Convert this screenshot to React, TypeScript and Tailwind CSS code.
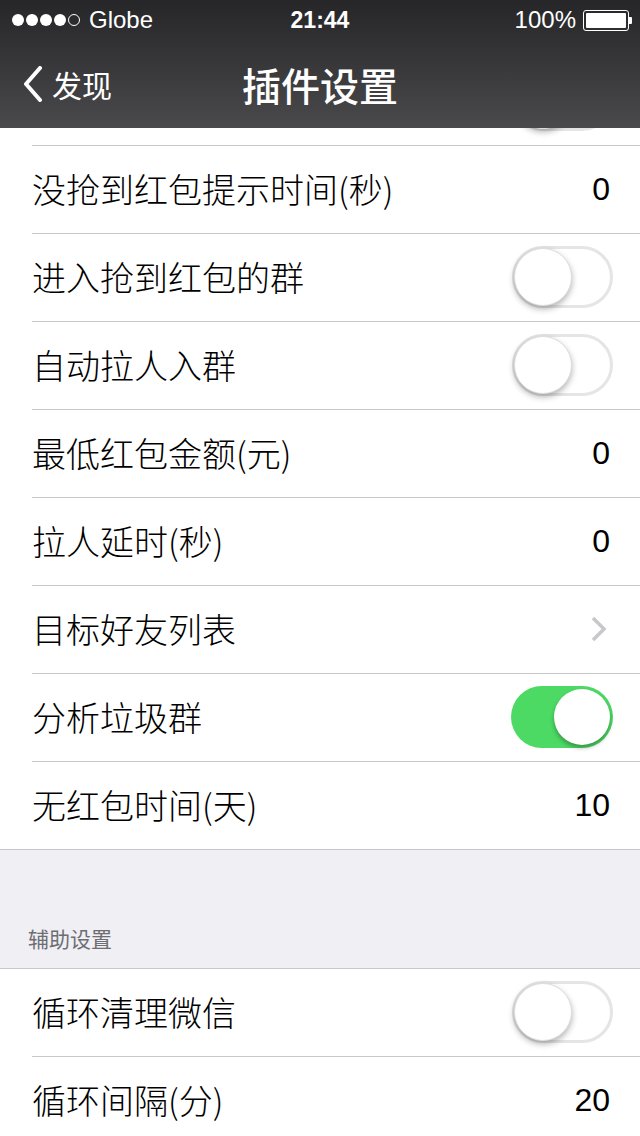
import React from "react";

const font = { fontFamily: '"Noto Sans CJK SC", "Liberation Sans", sans-serif' };

function Toggle({ on }: { on: boolean }) {
  return on ? (
    <div className="relative w-[102px] h-[62px] rounded-full bg-[#4cd964]">
      <div className="absolute right-[3px] top-[3px] w-[56px] h-[56px] rounded-full bg-white shadow-[0_3px_4px_rgba(0,0,0,0.3)]" />
    </div>
  ) : (
    <div className="relative w-[101px] h-[62px] rounded-full border-[3px] border-[#e5e5e5] bg-white">
      <div className="absolute left-[-1px] top-[-1px] w-[58px] h-[58px] rounded-full bg-white shadow-[0_3px_6px_rgba(0,0,0,0.3)] border border-[#ddd]" />
    </div>
  );
}

type RowProps = {
  label?: string;
  value?: string;
  toggle?: boolean;
  chevron?: boolean;
  last?: boolean;
};

function Row({ label, value, toggle, chevron, last }: RowProps) {
  return (
    <div className="pl-[32px] bg-white">
      <div
        className={`flex items-center justify-between pr-[27px] pb-[2px] ${
          last ? "h-[87px]" : "h-[88px] border-b border-[#c8c7cc]"
        }`}
      >
        <span className="text-[34px] text-black leading-none font-light" style={font}>
          {label}
        </span>
        {value !== undefined && (
          <span className="text-[32px] text-black leading-none pr-[3px]" style={{ fontFamily: '"Liberation Sans", sans-serif' }}>
            {value}
          </span>
        )}
        {toggle !== undefined && <Toggle on={toggle} />}
        {chevron && (
          <svg width="18" height="28" viewBox="0 0 18 28" className="mr-[5px]">
            <path d="M3 3 L14 14 L3 25" fill="none" stroke="#c7c7cc" strokeWidth="3.5" />
          </svg>
        )}
      </div>
    </div>
  );
}

export default function App() {
  return (
    <div className="w-[640px] h-[1136px] overflow-hidden bg-[#efeff4] flex flex-col">
      {/* Header */}
      <div className="h-[128px] bg-gradient-to-b from-[#262629] to-[#4a4a4c] text-white shrink-0 flex flex-col">
        <div className="h-[40px] flex items-center justify-between pl-[12px] pr-[8px] relative" style={{ fontFamily: '"Liberation Sans", sans-serif' }}>
          <div className="flex items-center gap-[9px] text-[24px]">
            <div className="flex items-center gap-[2px]">
              <div className="w-[12px] h-[12px] rounded-full bg-white" />
              <div className="w-[12px] h-[12px] rounded-full bg-white" />
              <div className="w-[12px] h-[12px] rounded-full bg-white" />
              <div className="w-[12px] h-[12px] rounded-full bg-white" />
              <div className="w-[12px] h-[12px] rounded-full border border-white" />
            </div>
            <span>Globe</span>
          </div>
          <div className="absolute left-0 right-0 text-center text-[23px] font-bold pointer-events-none">21:44</div>
          <div className="flex items-center gap-[7px] text-[24px]">
            <span>100%</span>
            <div className="flex items-center">
              <div className="w-[46px] h-[21px] border-[1.5px] border-white rounded-[3px] p-[2px]">
                <div className="w-full h-full bg-white rounded-[1px]" />
              </div>
              <div className="w-[3px] h-[7px] bg-white rounded-r-[1px]" />
            </div>
          </div>
        </div>
        <div className="h-[88px] relative flex items-center">
          <div className="flex items-center pl-[22px] gap-[8px]">
            <svg width="22" height="36" viewBox="0 0 22 36">
              <path d="M18 2 L4 18 L18 34" fill="none" stroke="white" strokeWidth="4" strokeLinecap="round" strokeLinejoin="round" />
            </svg>
            <span className="text-[30px]" style={font}>发现</span>
          </div>
          <div className="absolute left-0 right-0 text-center text-[39px] font-medium pointer-events-none" style={font}>
            插件设置
          </div>
        </div>
      </div>

      {/* partially scrolled row */}
      <div className="h-[18px] overflow-hidden shrink-0 bg-white pl-[32px]">
        <div className="h-[17px] border-b border-[#c8c7cc] box-content overflow-hidden">
          <div className="mt-[-71px] -ml-[32px]">
            <Row label="" toggle={false} last />
          </div>
        </div>
      </div>
      <Row label="没抢到红包提示时间(秒)" value="0" />
      <Row label="进入抢到红包的群" toggle={false} />
      <Row label="自动拉人入群" toggle={false} />
      <Row label="最低红包金额(元)" value="0" />
      <Row label="拉人延时(秒)" value="0" />
      <Row label="目标好友列表" chevron />
      <Row label="分析垃圾群" toggle={true} />
      <Row label="无红包时间(天)" value="10" last />
      <div className="border-t border-[#c8c7cc] h-[119px] flex items-end pl-[28px] pb-[14px] shrink-0">
        <span className="text-[21px] text-[#6d6d72]" style={font}>辅助设置</span>
      </div>
      <div className="border-t border-[#c8c7cc]">
        <Row label="循环清理微信" toggle={false} />
        <Row label="循环间隔(分)" value="20" last />
      </div>
    </div>
  );
}
